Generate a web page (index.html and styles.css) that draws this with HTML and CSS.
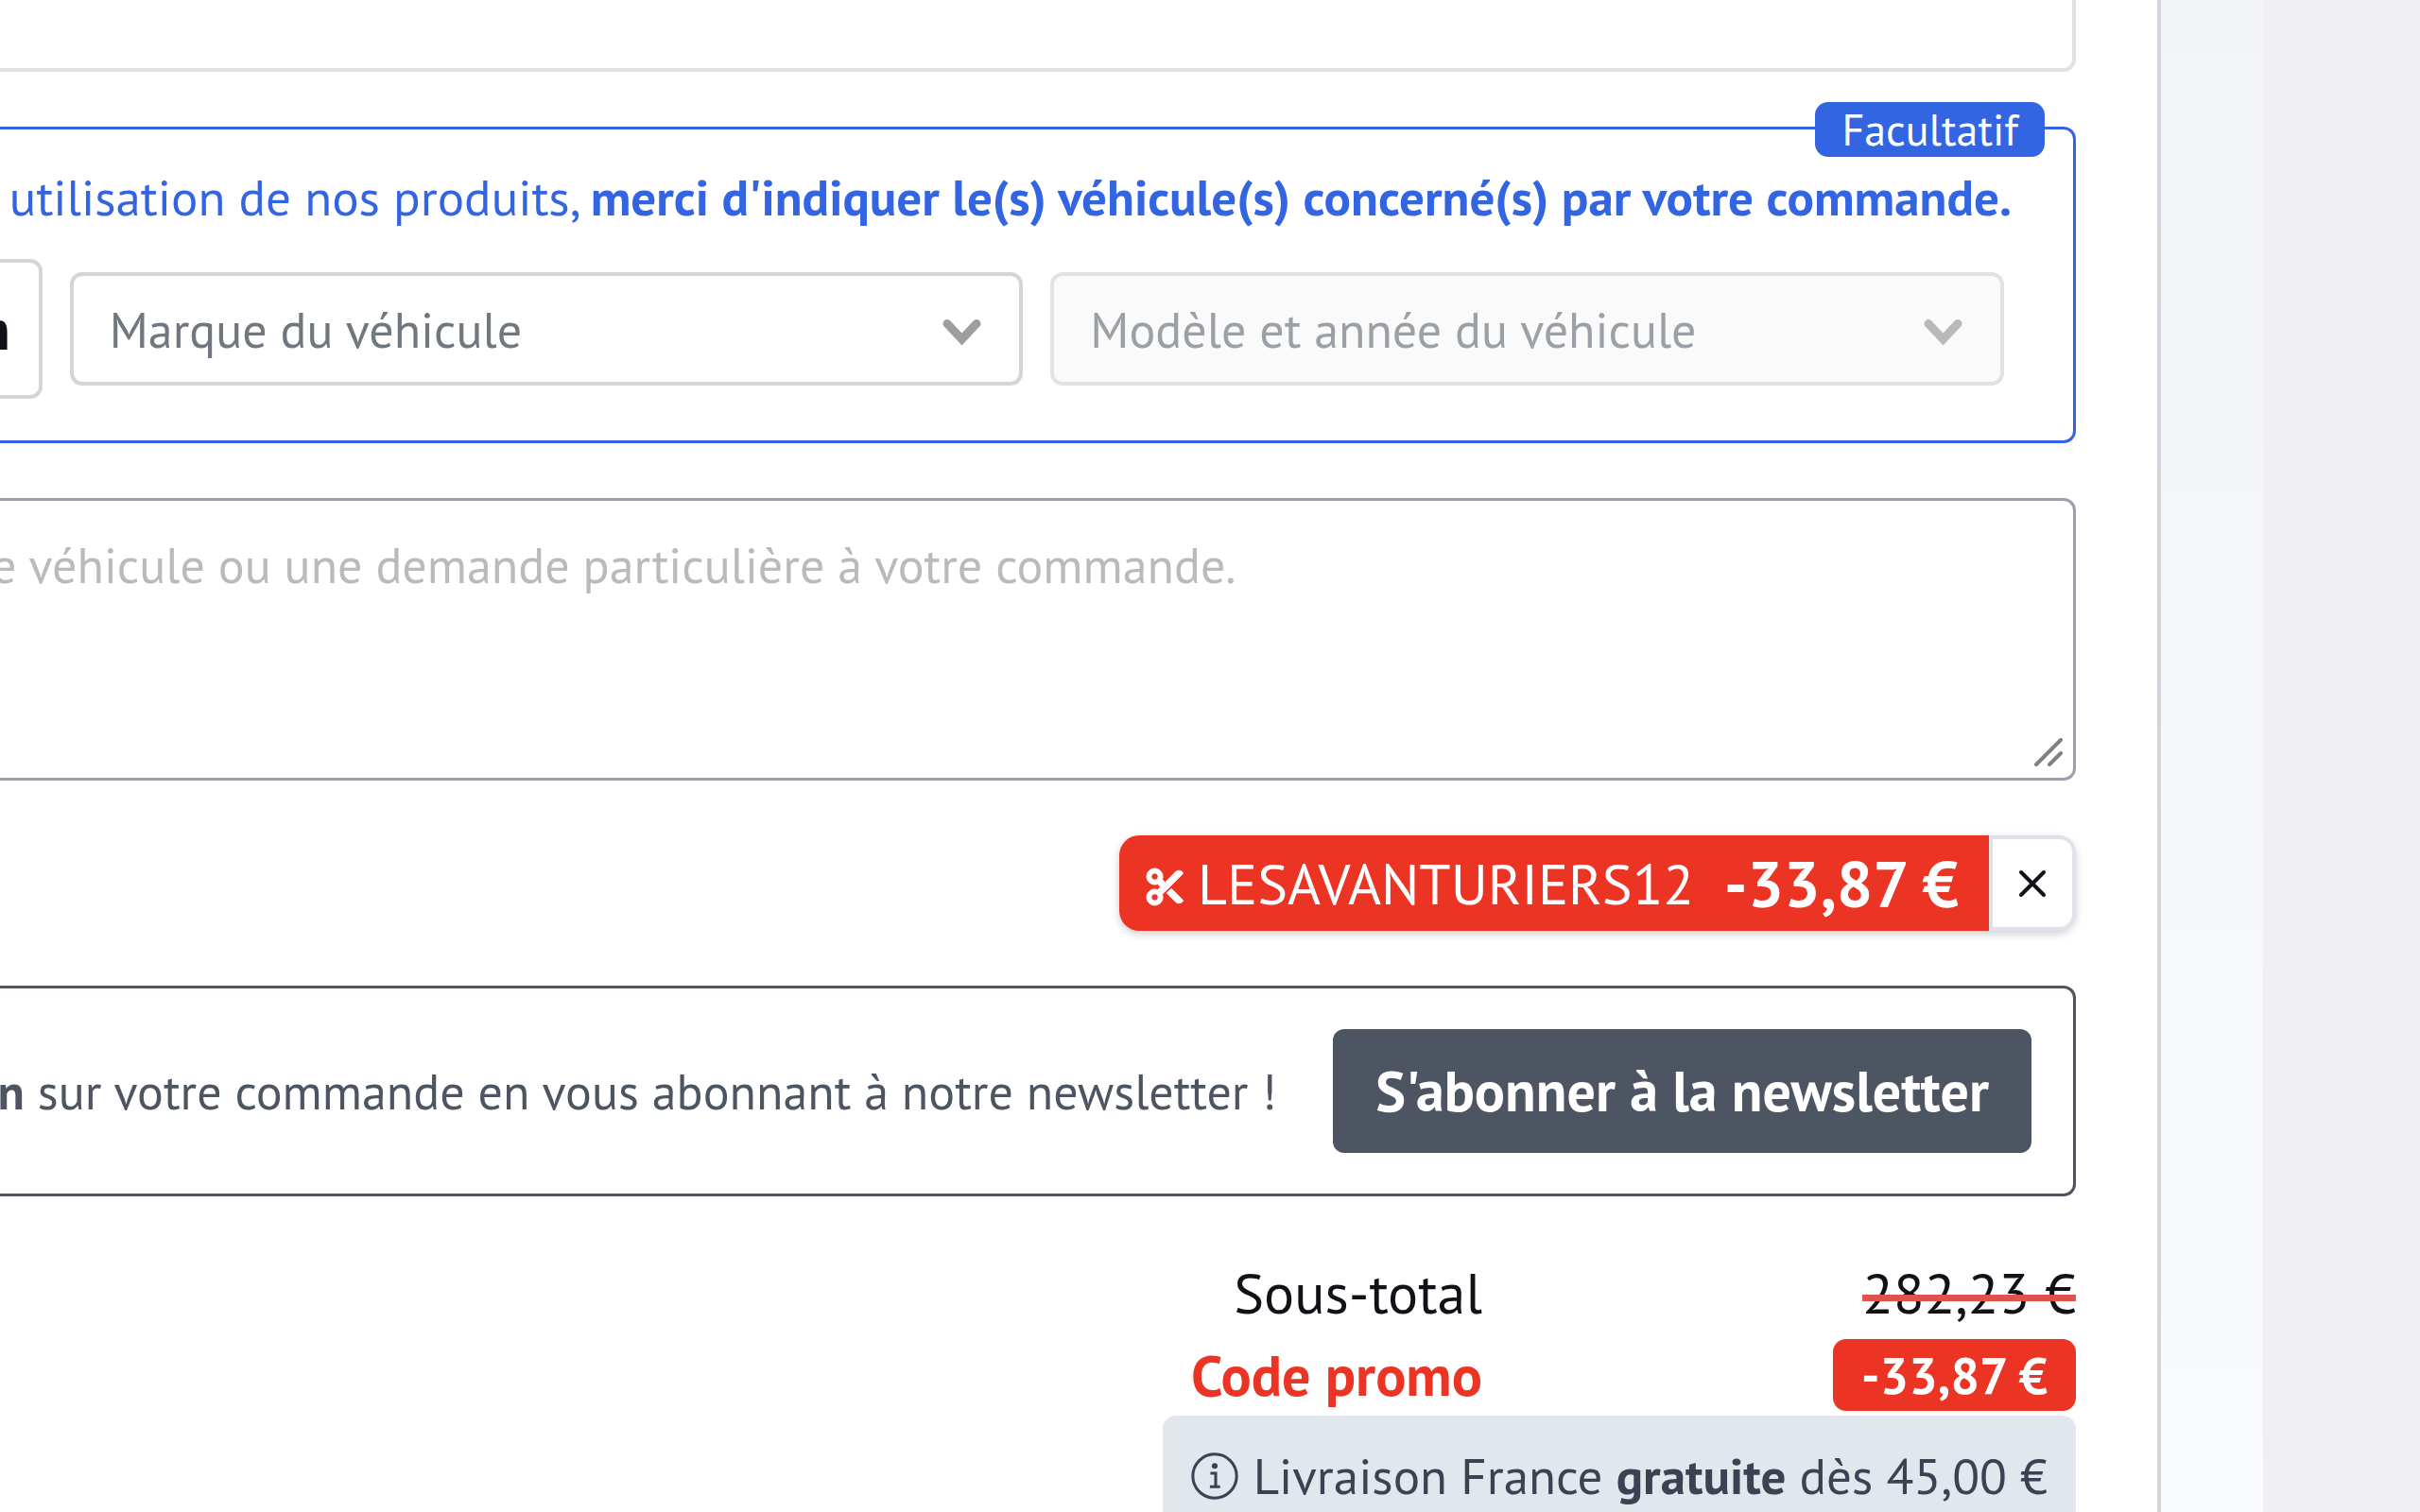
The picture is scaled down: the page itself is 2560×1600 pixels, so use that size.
FILE: index.html
```html
<!DOCTYPE html>
<html lang="fr">
<head>
    <meta charset="UTF-8">
    <title>Votre panier</title>
    <link rel="stylesheet" href="styles.css">
</head>
<body>
    <div class="page">
        <main class="cart">

            <section class="card"></section>

            <!-- Vehicle picker -->
            <section class="vehicle">
                <span class="vehicle-tag">Facultatif</span>
                <p class="vehicle-note"><span>utilisation de nos produits, <strong>merci d'indiquer le(s) véhicule(s) concerné(s) par votre commande.</strong></span></p>
                <div class="vehicle-row">
                    <button type="button" class="vehicle-btn">n</button>
                    <div class="select">
                        <select aria-label="Marque du véhicule">
                            <option>Marque du véhicule</option>
                        </select>
                        <svg class="chevron" viewBox="0 0 41 29"><path d="M5 5.500L20.500 22L36 5.500"/></svg>
                    </div>
                    <div class="select select-off">
                        <select aria-label="Modèle et année du véhicule" disabled>
                            <option>Modèle et année du véhicule</option>
                        </select>
                        <svg class="chevron" viewBox="0 0 41 29"><path d="M5 5.500L20.500 22L36 5.500"/></svg>
                    </div>
                </div>
            </section>

            <div class="message">
                <textarea aria-label="Message" placeholder="e véhicule ou une demande particulière à votre commande."></textarea>
                <svg class="grip" viewBox="0 0 30 30"><path d="M2 28L28 2M16 28L28 16"/></svg>
            </div>

            <!-- Applied promo code -->
            <div class="promo">
                <div class="promo-code">
                    <svg class="scissors" viewBox="0 0 512 512"><path d="M256 192l-39.500-39.500c4.900-12.600 7.500-26.200 7.500-40.500C224 50.100 173.900 0 112 0S0 50.100 0 112s50.100 112 112 112c14.300 0 27.900-2.700 40.500-7.500L192 256l-39.500 39.500c-12.600-4.900-26.200-7.500-40.500-7.500C50.100 288 0 338.100 0 400s50.100 112 112 112s112-50.100 112-112c0-14.300-2.700-27.900-7.500-40.500L499.200 76.800c7.100-7.100 7.100-18.500 0-25.600c-28.300-28.300-74.100-28.300-102.400 0L256 192zm22.600 150.600L396.800 460.800c28.300 28.300 74.100 28.300 102.400 0c7.100-7.100 7.100-18.500 0-25.600L342.600 278.600l-64 64zM64 112a48 48 0 1 1 96 0 48 48 0 1 1-96 0zm48 240a48 48 0 1 1 0 96 48 48 0 1 1 0-96z"/></svg>
                    <span>LESAVANTURIERS12</span>
                    <strong>-33,87 €</strong>
                </div>
                <button type="button" class="promo-remove" aria-label="Retirer le code promo">
                    <svg viewBox="0 0 30 30"><path d="M3 3L27 27M27 3L3 27"/></svg>
                </button>
            </div>

            <section class="newsletter">
                <p><strong>n</strong> sur votre commande en vous abonnant à notre newsletter !</p>
                <button type="button">S'abonner à la newsletter</button>
            </section>

            <table class="totals">
                <tr>
                    <th scope="row">Sous-total</th>
                    <td><del>282,23 €</del></td>
                </tr>
                <tr class="totals-promo">
                    <th scope="row">Code promo</th>
                    <td><span class="totals-badge">-33,87 €</span></td>
                </tr>
                <tr>
                    <td colspan="2">
                        <div class="shipping">
                            <svg viewBox="0 0 49 49"><circle cx="24.500" cy="24.500" r="22.700"/><path d="M20 21.500H25.500V35M19.500 35.500H30"/><circle class="dot" cx="24.500" cy="14" r="3"/></svg>
                            <span>Livraison France <strong>gratuite</strong> dès 45,00 €</span>
                        </div>
                    </td>
                </tr>
            </table>

        </main>
    </div>
</body>
</html>
```
FILE: styles.css
```css
* {
    box-sizing: border-box;
}

body {
    margin: 0;
    padding-right: 166px;
    background: #f0f0f2;
    color: #101217;
    font-family: "PT Sans", "Noto Sans", sans-serif;
    font-size: 52px;
    line-height: 78px;
}

p {
    margin: 0;
}

button, select, textarea {
    margin: 0;
    font-family: inherit;
}

.page {
    height: 100vh;
    padding-right: 108px;
    overflow: hidden;
    background: linear-gradient(#f3f4f7, #f9fafb);
}

.cart {
    display: flex;
    flex-direction: column;
    gap: 58px;
    min-height: 100%;
    padding-right: 86px;
    border-right: 4px solid #d1d6db;
    background: #fff;
}

/* boxes run off the left side, so they have no left border */
.card {
    height: 76px;
    border: solid #dfe3e8;
    border-width: 0 4px 4px 0;
    border-radius: 0 0 13px 0;
}

/* vehicle */
.vehicle {
    position: relative;
    padding: 33px 65px 44px 0;
    border: 3px solid #3365e3;
    border-left: 0;
    border-radius: 0 13px 13px 0;
}

.vehicle-tag {
    position: absolute;
    top: -29px;
    right: 30px;
    padding: 0 28px;
    border-radius: 14px;
    background: #3365e3;
    color: #fff;
    font-size: 46px;
    line-height: 58px;
}

.vehicle-note {
    display: flex;
    justify-content: flex-end;
    color: #3365e3;
    font-size: 53px;
    white-space: nowrap;
}

.vehicle-row {
    display: flex;
    align-items: center;
    gap: 29px;
    margin-top: 26px;
    padding-right: 8px;
}

.vehicle-btn {
    height: 148px;
    margin-left: -56px;
    padding: 0 30px;
    border: 4px solid #d1d6db;
    border-radius: 13px;
    background: #fff;
    color: #101217;
    font-size: 60px;
    font-weight: bold;
}

.select {
    position: relative;
    flex: 1;
}

.select select {
    display: block;
    width: 100%;
    height: 120px;
    padding: 0 100px 0 38px;
    border: 4px solid #d1d6db;
    border-radius: 13px;
    background: #fff;
    color: #70777f;
    font-size: 52px;
    appearance: none;
}

.select-off select {
    border-color: #dfe3e6;
    background: #fafafa;
    color: #9aa0a5;
    opacity: 1;
}

.chevron {
    position: absolute;
    top: 49px;
    right: 44px;
    width: 41px;
    height: 29px;
    fill: none;
    stroke: #9e9e9e;
    stroke-width: 9;
    stroke-linecap: round;
    pointer-events: none;
}

.select-off .chevron {
    stroke: #b9b9b9;
}

/* message */
.message {
    position: relative;
    margin-left: -9px;
}

.message textarea {
    display: block;
    width: 100%;
    height: 299px;
    padding: 29px 40px 29px 0;
    border: 3px solid #9ca0ae;
    border-left: 0;
    border-radius: 0 13px 13px 0;
    background: #fff;
    font-size: 52px;
    line-height: 78px;
    resize: none;
}

.message textarea::placeholder {
    color: #bababa;
}

.grip {
    position: absolute;
    right: 14px;
    bottom: 15px;
    width: 30px;
    height: 30px;
    fill: none;
    stroke: #808080;
    stroke-width: 4;
    stroke-linecap: round;
}

/* promo */
.promo {
    display: flex;
    align-self: flex-end;
    height: 101px;
    border-radius: 21px;
    box-shadow: 0 3px 10px rgba(0, 0, 0, 0.2);
}

.promo-code {
    display: flex;
    align-items: center;
    padding: 0 32px 0 29px;
    border-radius: 21px 0 0 21px;
    background: #eb3424;
    color: #fff;
    font-size: 60px;
}

.promo-code strong {
    margin-left: 32px;
    font-size: 68px;
}

.scissors {
    width: 39px;
    height: 39px;
    margin: 8px 15px 0 0;
    overflow: visible;
    fill: #fff;
    stroke: #fff;
    stroke-width: 12;
}

.promo-remove {
    display: flex;
    align-items: center;
    justify-content: center;
    width: 92px;
    padding: 0;
    border: 4px solid #dfe2ea;
    border-radius: 0 18px 18px 0;
    background: #fff;
}

.promo-remove svg {
    width: 30px;
    height: 30px;
    stroke: #101217;
    stroke-width: 4;
    stroke-linecap: round;
}

/* newsletter */
.newsletter {
    display: flex;
    align-items: center;
    justify-content: flex-end;
    gap: 60px;
    padding: 43px 44px 43px 0;
    border: 3px solid #4d5562;
    border-left: 0;
    border-radius: 0 13px 13px 0;
    color: #4d5562;
    white-space: nowrap;
}

.newsletter button {
    padding: 20px 45px;
    border: 0;
    border-radius: 12px;
    background: #4d5462;
    color: #fff;
    font-size: 60px;
    font-weight: bold;
    line-height: 91px;
}

/* totals */
.totals {
    align-self: flex-end;
    border-collapse: collapse;
    font-size: 60px;
    text-align: right;
    white-space: nowrap;
}

.totals th,
.totals td {
    height: 87px;
    padding: 0;
}

.totals th {
    width: 35%;
    font-weight: normal;
    text-align: right;
}

.totals del {
    position: relative;
    display: inline-block;
    text-decoration: none;
}

.totals del::after {
    content: "";
    position: absolute;
    top: calc(50% + 2px);
    left: 0;
    width: 100%;
    height: 7px;
    background: #e0524d;
}

.totals .totals-promo th {
    color: #eb3424;
    font-weight: bold;
}

.totals-badge {
    display: block;
    width: fit-content;
    margin-left: auto;
    padding: 0 30px;
    border-radius: 14px;
    background: #eb3424;
    color: #fff;
    font-size: 54px;
    font-weight: bold;
    line-height: 76px;
}

.shipping {
    display: flex;
    align-items: center;
    gap: 16px;
    padding: 25px 30px;
    border-radius: 14px;
    background: #e2e6ed;
    color: #3b4252;
    font-size: 53px;
}

.shipping svg {
    width: 50px;
    height: 50px;
    fill: none;
    stroke: #3b4252;
    stroke-width: 3;
}

.shipping .dot {
    fill: #3b4252;
    stroke: none;
}
```
